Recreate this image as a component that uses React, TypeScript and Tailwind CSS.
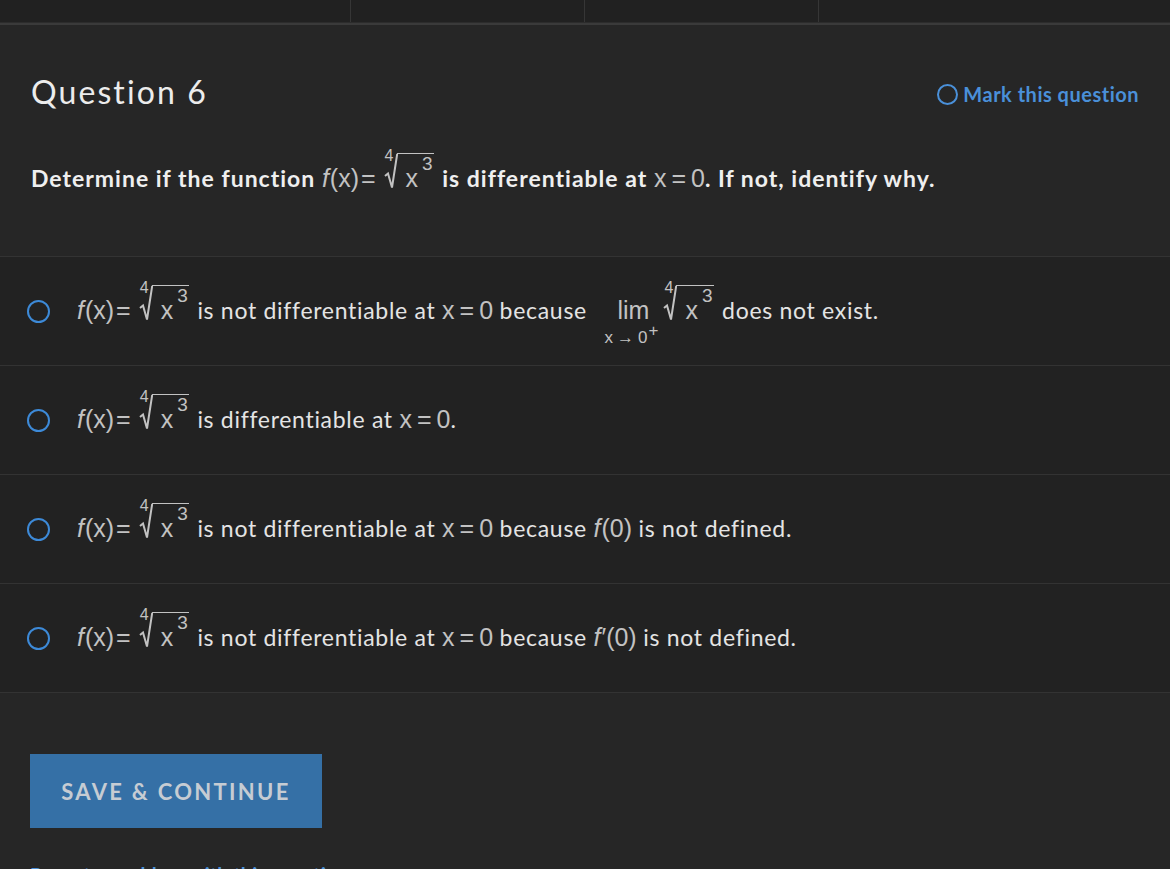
import React from "react";

const MATH = "font-['Liberation_Sans_Narrow','Liberation_Sans',sans-serif] text-[#c2c2c2] font-normal tracking-normal";

function Root() {
  return (
    <span className="relative inline-block pl-[13px] ml-[6px] mr-[2px]">
      <span className="absolute left-[1px] top-[-5px] text-[16px] leading-none">4</span>
      <svg className="absolute left-0 top-0" width="14" height="36" viewBox="0 0 14 36">
        <path d="M1 23 L4 20.5 L8 34.5 L13.2 0.8" stroke="#c2c2c2" strokeWidth="2" fill="none" strokeLinejoin="miter" />
      </svg>
      <span className="inline-block border-t-[1.5px] border-[#c2c2c2] pl-[9px] pr-[1px] pt-[12px] leading-none">
        x<span className="relative top-[-17px] ml-[4px] text-[19px]">3</span>
      </span>
    </span>
  );
}

function Fx() {
  return (
    <span className={MATH + " text-[25px]"}>
      <i className="pr-[1px]">f</i>(x)<span className="mx-[2px]">=</span>
      <Root />
    </span>
  );
}

function X0() {
  return (
    <span className={MATH + " text-[25px]"}>
      x<span className="mx-[5px]">=</span>0
    </span>
  );
}

function Radio() {
  return <span className="w-[23px] h-[23px] rounded-full border-[2.5px] border-[#3d8ad8] shrink-0" />;
}

function Option({ children }: { children: React.ReactNode }) {
  return (
    <div className="h-[109px] border-b border-[#333333] flex items-center pl-[27px] gap-[27px]">
      <Radio />
      <div className="text-[23px] tracking-[0.7px] text-[#e4e4e4] whitespace-nowrap pb-[7px]">{children}</div>
    </div>
  );
}

export default function App() {
  return (
    <div className="w-[1170px] h-[869px] overflow-hidden bg-[#262626] font-['Lato',sans-serif]">
      <div className="h-[23px] bg-[#212121] flex border-b border-[#2c2c2c]">
        <div className="w-[351px] border-r border-[#363636]" />
        <div className="w-[234px] border-r border-[#363636]" />
        <div className="w-[234px] border-r border-[#363636]" />
        <div className="flex-1" />
      </div>
      <div className="h-[2px] bg-[#3a3a3a]" />

      <div className="px-[31px] pt-[47px]">
        <div className="flex items-center justify-between h-[40px]">
          <h1 className="text-[32px] text-[#ececec] tracking-[2.1px] leading-none">Question 6</h1>
          <button className="flex items-center gap-[5px] text-[20px] font-bold tracking-[0.5px] text-[#4a90d9] mt-[4px]">
            <span className="w-[21px] h-[21px] rounded-full border-[2.5px] border-[#4a90d9]" />
            Mark this question
          </button>
        </div>
        <div className="mt-[47px] h-[32px] flex items-center text-[23px] font-bold tracking-[1px] text-[#efefef] whitespace-nowrap pb-[65px] box-content">
          <span>
            Determine if the function <Fx /> is differentiable at <X0 />. If not, identify why.
          </span>
        </div>
      </div>

      <div className="bg-[#222222] border-t border-[#333333]">
        <Option>
          <Fx /> is not differentiable at <X0 /> because{" "}
          <span className={MATH + " text-[25px] leading-[25px] relative inline-block ml-[24px]"}>
            lim
            <span className="absolute left-[-13px] top-[31px] text-[17px] whitespace-nowrap leading-none">
              x<span className="mx-[4px] text-[17px]">→</span>0<span className="relative top-[-7px] ml-[1px] text-[17px]">+</span>
            </span>
          </span>
          <span className={MATH + " text-[25px] ml-[8px]"}>
            <Root />
          </span>{" "}
          does not exist.
        </Option>
        <Option>
          <Fx /> is differentiable at <X0 />.
        </Option>
        <Option>
          <Fx /> is not differentiable at <X0 /> because{" "}
          <span className={MATH + " text-[25px]"}>
            <i className="pr-[1px]">f</i>(0)
          </span>{" "}
          is not defined.
        </Option>
        <Option>
          <Fx /> is not differentiable at <X0 /> because{" "}
          <span className={MATH + " text-[25px]"}>
            <i className="pr-[1px]">f</i>′(0)
          </span>{" "}
          is not defined.
        </Option>
      </div>

      <div className="px-[30px] pt-[61px]">
        <button className="w-[292px] h-[74px] bg-[#3570a6] text-[#c6ccd3] text-[22px] font-bold tracking-[2.3px]">
          SAVE &amp; CONTINUE
        </button>
        <div className="mt-[35px] text-[20px] font-bold text-[#4a90d9] leading-[24px]">
          Report a problem with this question
        </div>
      </div>
    </div>
  );
}
